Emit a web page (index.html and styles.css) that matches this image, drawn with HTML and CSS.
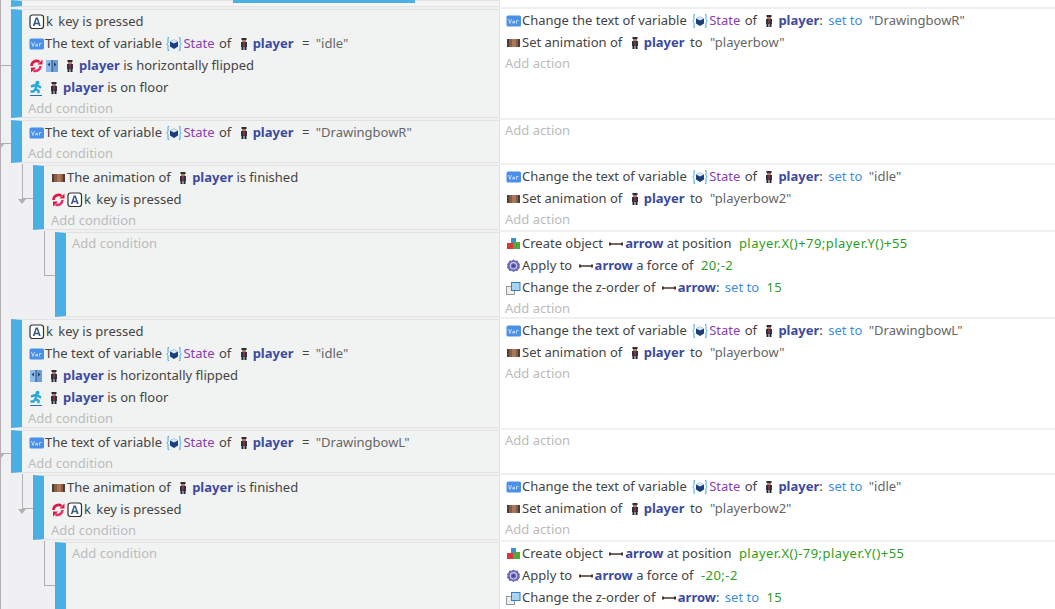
FILE: index.html
```html
<!DOCTYPE html>
<html lang="en">
<head>
  <meta charset="UTF-8">
  <title>Events sheet</title>
  <link rel="stylesheet" href="styles.css">
</head>
<body>
  <!-- icon sprites -->
  <svg class="sprites" width="0" height="0">
    <symbol id="i-key" viewBox="0 0 16 16">
      <rect x="1" y="1" width="13.500" height="13.500" rx="2.500" fill="#fff" stroke="#2e2e2e" stroke-width="1.200"/>
      <path d="M3.800 12 6.700 3.500h2.100L11.700 12H9.900l-.5-1.800H6.100L5.600 12zM6.500 8.800h2.500L7.750 5z" fill="#34568a"/>
    </symbol>
    <symbol id="i-var" viewBox="0 0 16 16">
      <rect x="0.500" y="2.500" width="14.500" height="11" rx="1.500" fill="#4a90e8"/>
      <path d="M2.500 6l1.500 4.500L5.500 6M6.800 10.500V8.500l1.700-.5v2.500M6.800 9.500h1.700M10.500 10.500V7.500h2" fill="none" stroke="#bcd8f8" stroke-width="1"/>
    </symbol>
    <symbol id="i-state" viewBox="0 0 16 16">
      <path d="M3 1.500H2v5l-1.200 1.500L2 9.500v5h1M13 1.500h1v5l1.200 1.500L14 9.500v5h-1" fill="none" stroke="#3fa9e8" stroke-width="1"/>
      <path d="M8 3.500l4 2v5l-4 2.500-4-2.500v-5z" fill="#1c3f7c"/>
      <path d="M4 5.500l4 2 4-2-4-2z" fill="#dbe8f6"/>
    </symbol>
    <symbol id="i-player" viewBox="0 0 12 16">
      <rect x="3.500" y="2" width="5" height="2" fill="#2d2d33"/>
      <rect x="4" y="4" width="4" height="2" fill="#a9806a"/>
      <rect x="3" y="6" width="6" height="5" fill="#2b3442"/>
      <rect x="5.300" y="6" width="1.400" height="4.500" fill="#b5303a"/>
      <rect x="3.500" y="11" width="2" height="3" fill="#1f2733"/>
      <rect x="6.500" y="11" width="2" height="3" fill="#1f2733"/>
    </symbol>
    <symbol id="i-invert" viewBox="0 0 16 16">
      <path d="M2.500 8a5 5 0 0 1 8-4" fill="none" stroke="#d81b4a" stroke-width="2.600"/>
      <path d="M11.500 8a5 5 0 0 1-7 4.500" fill="none" stroke="#e0356a" stroke-width="2.600"/>
      <path d="M8.500 6.500h5v-5zM7 9.500H2v5z" fill="#d81b4a"/>
    </symbol>
    <symbol id="i-flip" viewBox="0 0 16 16">
      <rect x="1" y="2" width="12" height="12" fill="#8fbbec"/>
      <rect x="7" y="2" width="6" height="12" fill="#6d9fd8"/>
      <path d="M7 2v12" stroke="#2c4a70"/>
      <path d="M2.500 6.500 5 4.500v4zM11.500 6.500 9 4.500v4z" fill="#244064"/>
    </symbol>
    <symbol id="i-floor" viewBox="0 0 16 16">
      <circle cx="8.500" cy="2.800" r="2" fill="#28a8d8"/>
      <path d="M2 6.500 7 4.800l2 1 3 1.800M7.500 5.500 6.500 9l3 1.800v2.500M6.500 9 4.500 11.500H1.500" fill="none" stroke="#28a8d8" stroke-width="2.400"/>
      <path d="M1 15.500h12" stroke="#2a6fb0"/>
    </symbol>
    <symbol id="i-anim" viewBox="0 0 16 16">
      <rect x="1" y="4" width="13" height="8" fill="#8a5c44"/>
      <rect x="1" y="4" width="2" height="8" fill="#4a3c38"/>
      <rect x="6" y="4" width="4" height="8" fill="#a87658"/>
      <rect x="12" y="4" width="2" height="8" fill="#4a3c38"/>
    </symbol>
    <symbol id="i-create" viewBox="0 0 16 16">
      <rect x="5" y="2" width="5" height="6" fill="#3d8fd8"/>
      <rect x="1" y="7" width="6" height="6" fill="#d8383a"/>
      <rect x="7" y="6" width="7" height="7" fill="#52a83c"/>
    </symbol>
    <symbol id="i-force" viewBox="0 0 16 16">
      <path d="M7.500 1.500l1.800 1.300 2.300-.2.900 2.100 1.600 1.500-.7 1.600.7 1.600-1.600 1.500-.9 2.100-2.300-.2-1.800 1.300-1.800-1.300-2.300.2-.9-2.100L.9 9.400l.7-1.600-.7-1.600 1.600-1.500.9-2.100 2.300.2z" fill="#6a68b8"/>
      <circle cx="7.500" cy="7.800" r="3.200" fill="none" stroke="#c8c8ea" stroke-width="1.200"/>
      <circle cx="7.500" cy="7.800" r="1.200" fill="#3c3a88"/>
    </symbol>
    <symbol id="i-zorder" viewBox="0 0 16 16">
      <rect x="0.500" y="6.500" width="8" height="8" fill="#eee" stroke="#999"/>
      <rect x="5.500" y="2.500" width="8.500" height="8" fill="#a8d4f6" stroke="#3a7fc8"/>
    </symbol>
    <symbol id="i-arrow" viewBox="0 0 14 6">
      <path d="M1 1.500v3M13 1.500v3" stroke="#4a3428" stroke-width="2"/>
      <path d="M0 3h14" stroke="#4a3428" stroke-width="1.500"/>
    </symbol>
  </svg>

  <div class="scroll-thumb"></div>

  <div class="sheet">
    <div class="row top">
      <div class="conds"></div>
      <div class="acts"></div>
    </div>

    <!-- k pressed, right -->
    <div class="row">
      <i class="stub stub-a"></i>
      <div class="conds">
        <div class="line"><svg class="ic"><use href="#i-key"/></svg><span class="k">k</span> key is pressed</div>
        <div class="line"><svg class="ic"><use href="#i-var"/></svg>The text of variable <svg class="ic st"><use href="#i-state"/></svg><span class="var">State</span> of <svg class="pl"><use href="#i-player"/></svg><b>player</b> <span class="eq">=</span> <span class="str">"idle"</span></div>
        <div class="line"><svg class="ic"><use href="#i-invert"/></svg><svg class="ic"><use href="#i-flip"/></svg><svg class="pl"><use href="#i-player"/></svg><b>player</b> is horizontally flipped</div>
        <div class="line"><svg class="ic"><use href="#i-floor"/></svg><svg class="pl"><use href="#i-player"/></svg><b>player</b> is on floor</div>
        <div class="add">Add condition</div>
      </div>
      <div class="acts">
        <div class="line"><svg class="ic"><use href="#i-var"/></svg>Change the text of variable <svg class="ic st"><use href="#i-state"/></svg><span class="var">State</span> of <svg class="pl"><use href="#i-player"/></svg><b>player</b>: <span class="op">set to</span> <span class="str">"DrawingbowR"</span></div>
        <div class="line"><svg class="ic"><use href="#i-anim"/></svg>Set animation of <svg class="pl"><use href="#i-player"/></svg><b>player</b> <span class="to">to</span> <span class="str">"playerbow"</span></div>
        <div class="add">Add action</div>
      </div>
    </div>

    <div class="row">
      <i class="stub stub-b"></i><i class="tip tip-b"></i>
      <div class="conds">
        <div class="line"><svg class="ic"><use href="#i-var"/></svg>The text of variable <svg class="ic st"><use href="#i-state"/></svg><span class="var">State</span> of <svg class="pl"><use href="#i-player"/></svg><b>player</b> <span class="eq">=</span> <span class="str">"DrawingbowR"</span></div>
        <div class="add">Add condition</div>
      </div>
      <div class="acts">
        <div class="add">Add action</div>
      </div>
    </div>

    <div class="row sub">
      <i class="elbow elbow-sub"></i><i class="tip tip-sub"></i>
      <div class="conds">
        <div class="line"><svg class="ic"><use href="#i-anim"/></svg>The animation of <svg class="pl"><use href="#i-player"/></svg><b>player</b> is finished</div>
        <div class="line"><svg class="ic"><use href="#i-invert"/></svg><svg class="ic"><use href="#i-key"/></svg><span class="k">k</span> key is pressed</div>
        <div class="add">Add condition</div>
      </div>
      <div class="acts">
        <div class="line"><svg class="ic"><use href="#i-var"/></svg>Change the text of variable <svg class="ic st"><use href="#i-state"/></svg><span class="var">State</span> of <svg class="pl"><use href="#i-player"/></svg><b>player</b>: <span class="op">set to</span> <span class="str">"idle"</span></div>
        <div class="line"><svg class="ic"><use href="#i-anim"/></svg>Set animation of <svg class="pl"><use href="#i-player"/></svg><b>player</b> <span class="to">to</span> <span class="str">"playerbow2"</span></div>
        <div class="add">Add action</div>
      </div>
    </div>

    <div class="row subsub">
      <i class="elbow elbow-subsub"></i>
      <div class="conds">
        <div class="add">Add condition</div>
      </div>
      <div class="acts">
        <div class="line"><svg class="ic"><use href="#i-create"/></svg>Create object <svg class="ar"><use href="#i-arrow"/></svg><b>arrow</b> at position <span class="num">player.X()+79;player.Y()+55</span></div>
        <div class="line"><svg class="ic"><use href="#i-force"/></svg>Apply to <svg class="ar"><use href="#i-arrow"/></svg><b>arrow</b> a force of <span class="num">20;-2</span></div>
        <div class="line"><svg class="ic"><use href="#i-zorder"/></svg>Change the z-order of <svg class="ar"><use href="#i-arrow"/></svg><b>arrow</b>: <span class="op">set to</span> <span class="num">15</span></div>
        <div class="add">Add action</div>
      </div>
    </div>

    <!-- k pressed, left -->
    <div class="row">
      <div class="conds">
        <div class="line"><svg class="ic"><use href="#i-key"/></svg><span class="k">k</span> key is pressed</div>
        <div class="line"><svg class="ic"><use href="#i-var"/></svg>The text of variable <svg class="ic st"><use href="#i-state"/></svg><span class="var">State</span> of <svg class="pl"><use href="#i-player"/></svg><b>player</b> <span class="eq">=</span> <span class="str">"idle"</span></div>
        <div class="line"><svg class="ic"><use href="#i-flip"/></svg><svg class="pl"><use href="#i-player"/></svg><b>player</b> is horizontally flipped</div>
        <div class="line"><svg class="ic"><use href="#i-floor"/></svg><svg class="pl"><use href="#i-player"/></svg><b>player</b> is on floor</div>
        <div class="add">Add condition</div>
      </div>
      <div class="acts">
        <div class="line"><svg class="ic"><use href="#i-var"/></svg>Change the text of variable <svg class="ic st"><use href="#i-state"/></svg><span class="var">State</span> of <svg class="pl"><use href="#i-player"/></svg><b>player</b>: <span class="op">set to</span> <span class="str">"DrawingbowL"</span></div>
        <div class="line"><svg class="ic"><use href="#i-anim"/></svg>Set animation of <svg class="pl"><use href="#i-player"/></svg><b>player</b> <span class="to">to</span> <span class="str">"playerbow"</span></div>
        <div class="add">Add action</div>
      </div>
    </div>

    <div class="row">
      <i class="stub stub-b"></i><i class="tip tip-b"></i>
      <div class="conds">
        <div class="line"><svg class="ic"><use href="#i-var"/></svg>The text of variable <svg class="ic st"><use href="#i-state"/></svg><span class="var">State</span> of <svg class="pl"><use href="#i-player"/></svg><b>player</b> <span class="eq">=</span> <span class="str">"DrawingbowL"</span></div>
        <div class="add">Add condition</div>
      </div>
      <div class="acts">
        <div class="add">Add action</div>
      </div>
    </div>

    <div class="row sub">
      <i class="elbow elbow-sub"></i><i class="tip tip-sub"></i>
      <div class="conds">
        <div class="line"><svg class="ic"><use href="#i-anim"/></svg>The animation of <svg class="pl"><use href="#i-player"/></svg><b>player</b> is finished</div>
        <div class="line"><svg class="ic"><use href="#i-invert"/></svg><svg class="ic"><use href="#i-key"/></svg><span class="k">k</span> key is pressed</div>
        <div class="add">Add condition</div>
      </div>
      <div class="acts">
        <div class="line"><svg class="ic"><use href="#i-var"/></svg>Change the text of variable <svg class="ic st"><use href="#i-state"/></svg><span class="var">State</span> of <svg class="pl"><use href="#i-player"/></svg><b>player</b>: <span class="op">set to</span> <span class="str">"idle"</span></div>
        <div class="line"><svg class="ic"><use href="#i-anim"/></svg>Set animation of <svg class="pl"><use href="#i-player"/></svg><b>player</b> <span class="to">to</span> <span class="str">"playerbow2"</span></div>
        <div class="add">Add action</div>
      </div>
    </div>

    <div class="row subsub last">
      <i class="elbow elbow-subsub"></i>
      <div class="conds">
        <div class="add">Add condition</div>
      </div>
      <div class="acts">
        <div class="line"><svg class="ic"><use href="#i-create"/></svg>Create object <svg class="ar"><use href="#i-arrow"/></svg><b>arrow</b> at position <span class="num">player.X()-79;player.Y()+55</span></div>
        <div class="line"><svg class="ic"><use href="#i-force"/></svg>Apply to <svg class="ar"><use href="#i-arrow"/></svg><b>arrow</b> a force of <span class="num">-20;-2</span></div>
        <div class="line"><svg class="ic"><use href="#i-zorder"/></svg>Change the z-order of <svg class="ar"><use href="#i-arrow"/></svg><b>arrow</b>: <span class="op">set to</span> <span class="num">15</span></div>
      </div>
    </div>
  </div>
</body>
</html>
```

FILE: styles.css
```css
* {box-sizing: border-box;}
html, body {height: 100%; overflow: hidden;}
body {margin: 0; background: #f0f0f2; color: #444; font-family: "Noto Sans", sans-serif; font-size: 13px;}

.sprites {position: absolute;}
.scroll-thumb {position: absolute; top: 0; left: 233px; width: 182px; height: 3px; background: #4ab0e4; z-index: 2;}

.sheet {border-left: 1px solid #b0b0b0; height: 100%;}

/* rows: blue handle + conditions + actions */
.row {position: relative; display: flex; margin-bottom: 2px; padding-left: 10px;}
.row.top {height: 7px;}
.row.sub {padding-left: 32px;}
.row.subsub {padding-left: 54px;}
.row.last {min-height: 85px;}

.conds {flex: 1; min-width: 0; background: #f1f3f3; border: 1px solid #e2e2e2; border-left: 11px solid #4ab0e4; padding-left: 7px;}
.acts {flex: none; width: 555px; background: #fff; padding-left: 6px;}
.top .conds {background: #f4f4f4;}

.line {height: 22px; line-height: 22px; white-space: nowrap;}
.add {height: 19px; line-height: 20px; color: #bbb; margin-left: -1px;}
.sub .conds .add {margin-left: 0;}

.ic {width: 16px; height: 16px; vertical-align: -4px;}
.ic.st {margin: 0 1px;}
.acts .ic.st {margin-left: 2px;}
.pl {width: 12px; height: 16px; margin: 0 3px 0 3px; vertical-align: -4px;}
.ar {width: 14px; height: 6px; margin: 0 2px 0 3px; vertical-align: 1px;}

b {color: #3c4a9e; font-weight: 700;}
.var {color: #8a3fb0; margin-right: 1px;}
.op {color: #3f8ddf; margin-left: 2px;}
.num {color: #2f9c1e; margin-left: 4px; letter-spacing: 0.45px;}
.str {color: #666; margin-left: 3px;}
.to {margin: 0 1px 0 2px;}
.eq {margin-left: 5px;}
.k {margin: 0 2px 0 1px;}

/* tree connectors */
.stub {position: absolute; left: 0; width: 10px; height: 1px; background: #b0b0b0;}
.stub-a {top: 56px;}
.stub-b {top: 23px;}
.elbow {position: absolute; border-left: 1px solid #b0b0b0; border-bottom: 1px solid #b0b0b0;}
.elbow-sub {left: 21px; top: -1px; width: 11px; height: 35px;}
.elbow-subsub {left: 43px; top: -1px; width: 11px; height: 45px;}
.tip {position: absolute; width: 0; height: 0; border: 4px solid transparent; border-top: 5px solid #b0b0b0; border-bottom: 0;}
.tip-b {left: -4px; top: 23px;}
.tip-sub {left: 17px; top: 34px;}
```
